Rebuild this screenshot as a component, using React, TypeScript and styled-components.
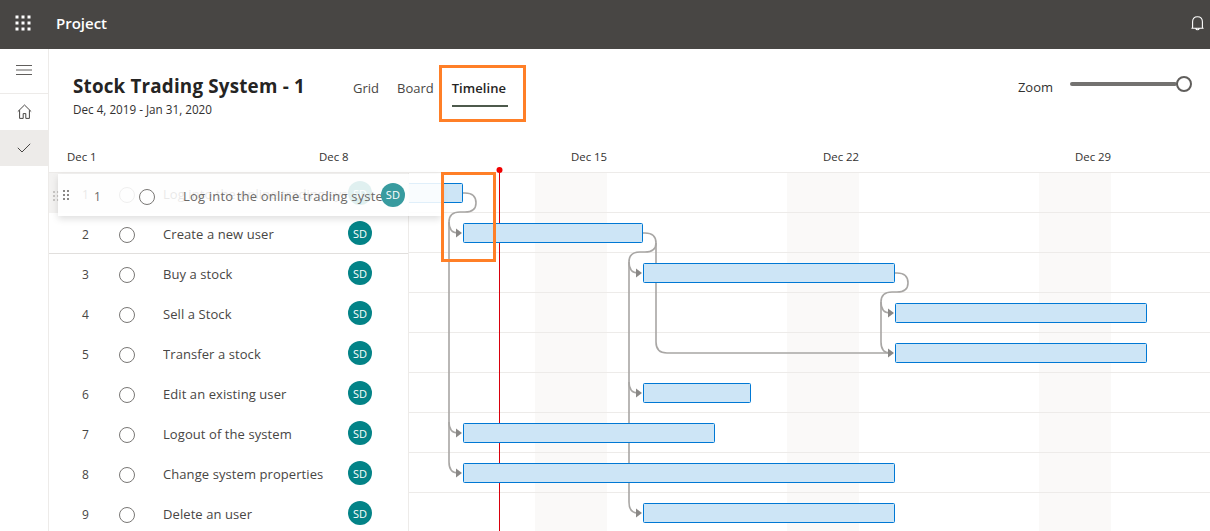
import React from "react";
import styled, { createGlobalStyle } from "styled-components";

const Global = createGlobalStyle`
  html, body { margin: 0; padding: 0; background: #fff; }
  body { font-family: "Open Sans", "Noto Sans", sans-serif; color: #323130; overflow: hidden; }
  #root { width: 1210px; height: 531px; overflow: hidden; }
`;

const Page = styled.div`
  position: relative;
  width: 1210px;
  height: 531px;
  display: flex;
  flex-direction: column;
  overflow: hidden;
`;
const TopBar = styled.header`
  height: 49px;
  flex: none;
  background: #484644;
  display: flex;
  align-items: center;
  color: #fff;
  padding-bottom: 2px;
  box-sizing: border-box;
`;
const Waffle = styled.svg`
  width: 16px;
  height: 16px;
  margin-left: 15px;
  margin-bottom: 2px;
`;
const Brand = styled.div`
  margin-left: 25px;
  margin-bottom: 1px;
  font-size: 15px;
  font-weight: 600;
  flex: 1;
`;
const Bell = styled.svg`
  width: 13px;
  height: 15px;
  margin-right: 6px;
`;
const Body = styled.div`
  flex: 1;
  display: flex;
  min-height: 0;
`;
const Rail = styled.nav`
  width: 48px;
  flex: none;
  border-right: 1px solid #edebe9;
  display: flex;
  flex-direction: column;
`;
const RailItem = styled.div<{ $h: number; $active?: boolean; $line?: boolean; $lift?: number }>`
  height: ${(p) => p.$h}px;
  display: flex;
  align-items: center;
  justify-content: center;
  box-sizing: border-box;
  padding-bottom: ${(p) => p.$lift ?? 0}px;
  background: ${(p) => (p.$active ? "#edebe9" : "transparent")};
  border-bottom: ${(p) => (p.$line ? "1px solid #edebe9" : "none")};
`;
const Main = styled.main`
  flex: 1;
  min-width: 0;
  display: flex;
  flex-direction: column;
`;
const Head = styled.div`
  height: 84px;
  flex: none;
  display: flex;
  align-items: flex-start;
  padding: 25px 18px 0 24px;
  box-sizing: border-box;
`;
const TitleBlock = styled.div`
  width: 280px;
`;
const Title = styled.h1`
  margin: 0;
  font-size: 18.8px;
  line-height: 24px;
  font-weight: 700;
  letter-spacing: 0.2px;
  white-space: nowrap;
  color: #252423;
`;
const Dates = styled.div`
  font-size: 11.7px;
  line-height: 16px;
  margin-top: 3px;
  color: #323130;
`;
const Tabs = styled.div`
  display: flex;
  gap: 18px;
  margin-top: 4px;
`;
const Tab = styled.div<{ $active?: boolean }>`
  font-size: 13px;
  line-height: 20px;
  height: 29px;
  box-sizing: border-box;
  padding-right: ${(p) => (p.$active ? 2 : 0)}px;
  letter-spacing: ${(p) => (p.$active ? 0.05 : 0)}px;
  color: ${(p) => (p.$active ? "#252423" : "#484644")};
  font-weight: ${(p) => (p.$active ? 600 : 400)};
  border-bottom: ${(p) => (p.$active ? "2px solid #4d5a4c" : "2px solid transparent")};
  white-space: nowrap;
`;
const ZoomBox = styled.div`
  margin-left: auto;
  display: flex;
  align-items: center;
  height: 20px;
`;
const ZoomLabel = styled.span`
  font-size: 13px;
  margin-right: 17px;
  position: relative;
  top: 3px;
`;
const Track = styled.div`
  width: 107px;
  height: 4px;
  border-radius: 2px;
  background: #737270;
`;
const Thumb = styled.div`
  width: 16px;
  height: 16px;
  box-sizing: border-box;
  border: 2px solid #605e5c;
  border-radius: 50%;
  background: #fff;
  margin-left: -1px;
`;
const Months = styled.div`
  height: 40px;
  flex: none;
  display: grid;
  grid-template-columns: repeat(5, 252px);
  padding-left: 18px;
  font-size: 11.4px;
  line-height: 16px;
  color: #323130;
  box-sizing: border-box;
  border-bottom: 1px solid #edebe9;
  padding-top: 16px;
`;
const Grid = styled.div`
  flex: 1;
  min-height: 0;
  display: flex;
`;
const List = styled.div`
  width: 360px;
  flex: none;
  border-right: 1px solid #edebe9;
  box-sizing: border-box;
`;
const Row = styled.div<{ $shade?: boolean; $drop?: boolean }>`
  height: 40px;
  box-sizing: border-box;
  display: flex;
  align-items: center;
  font-size: 13px;
  letter-spacing: 0.08px;
  color: #484644;
  background: ${(p) => (p.$shade ? "#f3f2f1" : "transparent")};
  box-shadow: ${(p) => (p.$drop ? "0 1px 0 #e1dfdd" : "none")};
`;
const Num = styled.span`
  width: 41px;
  flex: none;
  margin-top: 2px;
  text-align: right;
  padding-right: 1px;
  box-sizing: border-box;
  font-size: 12px;
`;
const Circle = styled.span`
  width: 16px;
  height: 16px;
  flex: none;
  box-sizing: border-box;
  border: 1px solid #797775;
  border-radius: 50%;
  margin-left: 29px;
  margin-top: 4px;
`;
const Name = styled.span`
  width: 185px;
  flex: none;
  margin-left: 28px;
  margin-top: 2px;
  white-space: nowrap;
  overflow: hidden;
`;
const Avatar = styled.span`
  width: 24px;
  height: 24px;
  flex: none;
  border-radius: 50%;
  background: #038387;
  color: #fff;
  font-size: 11px;
  font-weight: 500;
  display: flex;
  align-items: center;
  justify-content: center;
`;
const Chart = styled.svg`
  display: block;
  width: 801px;
  height: 358px;
  flex: none;
`;
const Ghost = styled.div`
  position: absolute;
  left: 58px;
  top: 174px;
  width: 383px;
  height: 42px;
  display: flex;
  align-items: center;
  background: rgba(255, 255, 255, 0.88);
  box-shadow: 0 3px 7px rgba(0, 0, 0, 0.13);
  font-size: 13px;
  letter-spacing: 0.18px;
  color: #6b6967;
`;
const GhostGrip = styled.svg`
  width: 8px;
  height: 12px;
  margin-left: 4px;
  flex: none;
`;
const GhostNum = styled.span`
  width: 14px;
  margin-left: 24px;
  margin-top: 2px;
  font-size: 12px;
  flex: none;
`;
const GhostCircle = styled(Circle)`
  margin-left: 31px;
`;
const GhostName = styled.span`
  width: 200px;
  flex: none;
  margin-left: 28px;
  margin-top: 2px;
  white-space: nowrap;
  overflow: hidden;
`;
const GhostAvatar = styled(Avatar)`
  background: #389b9f;
  margin-left: -2px;
  margin-bottom: 1px;
`;
const LeftGrip = styled.svg`
  position: absolute;
  left: 53px;
  top: 190px;
  width: 6px;
  height: 12px;
`;
const TodayPin = styled.svg`
  position: absolute;
  left: 494px;
  top: 165px;
  width: 10px;
  height: 10px;
`;
const Callout = styled.div<{ $x: number; $y: number; $w: number; $h: number }>`
  position: absolute;
  left: ${(p) => p.$x}px;
  top: ${(p) => p.$y}px;
  width: ${(p) => p.$w}px;
  height: ${(p) => p.$h}px;
  box-sizing: border-box;
  border: 3px solid #ff7f27;
  pointer-events: none;
`;

const tasks = [
  "Log into the online trading system",
  "Create a new user",
  "Buy a stock",
  "Sell a Stock",
  "Transfer a stock",
  "Edit an existing user",
  "Logout of the system",
  "Change system properties",
  "Delete an user",
];
const ox = 409;
const oy = 173;
const bars: [number, number, number][] = [
  [463, 400, 183],
  [643, 463, 223],
  [895, 643, 263],
  [1147, 895, 303],
  [1147, 895, 343],
  [751, 643, 383],
  [715, 463, 423],
  [895, 463, 463],
  [895, 643, 503],
];
const X = (v: number) => v - ox;
const Y = (v: number) => v - oy;

const links = [
  "M463 193 H465 Q476 193 476 203 Q476 212 465 212 H460 Q449 212 449 222 Q449 233 458 233",
  "M449 222 V462 Q449 473 458 473",
  "M449 422 Q449 433 458 433",
  "M643 233 H645 Q656 233 656 243 Q656 252 645 252 H640 Q629 252 629 262 Q629 273 638 273",
  "M629 262 V502 Q629 513 638 513",
  "M629 382 Q629 393 638 393",
  "M656 243 V342 Q656 353 667 353 H890",
  "M895 273 H897 Q908 273 908 283 Q908 292 897 292 H892 Q881 292 881 302 Q881 313 890 313",
  "M881 302 V342 Q881 353 890 353",
];
const arrows: [number, number][] = [
  [463, 233], [463, 433], [463, 473], [643, 273], [643, 393], [643, 513], [895, 313], [895, 353],
];

export default function App() {
  return (
    <Page>
      <Global />
      <TopBar>
        <Waffle viewBox="0 0 16 16" fill="#fff">
          {[0, 6, 12].flatMap((x) =>
            [0, 6, 12].map((y) => <rect key={`${x}-${y}`} x={x + 0.5} y={y + 0.5} width="3" height="3" />)
          )}
        </Waffle>
        <Brand>Project</Brand>
        <Bell viewBox="0 0 13 15" fill="none" stroke="#fff" strokeWidth="1.1">
          <path d="M1.6 12.3V5.8C1.6 2.8 3.6.7 6.5.7s4.9 2.1 4.9 5.1v6.5ZM.4 12.3h12.2M4.9 12.7c.2 1.4 3 1.4 3.2 0" />
        </Bell>
      </TopBar>
      <Body>
        <Rail>
          <RailItem $h={45} $line $lift={2}>
            <svg width="16" height="10" viewBox="0 0 16 10" stroke="#605e5c" strokeWidth="1">
              <path d="M0 .5h16M0 5h16M0 9.5h16" />
            </svg>
          </RailItem>
          <RailItem $h={36} $lift={2}>
            <svg width="15" height="15" viewBox="0 0 15 15" fill="none" stroke="#484644" strokeWidth="1">
              <path d="M.8 7.6 7.5 1l6.7 6.6M2.6 6.2v8.2h3.6V9.6h2.6v4.8h3.6V6.2" />
            </svg>
          </RailItem>
          <RailItem $h={36} $active>
            <svg width="14" height="10" viewBox="0 0 14 10" fill="none" stroke="#484644" strokeWidth="1">
              <path d="M.8 4.8 5 9 13.2.8" />
            </svg>
          </RailItem>
        </Rail>
        <Main>
          <Head>
            <TitleBlock>
              <Title>Stock Trading System - 1</Title>
              <Dates>Dec 4, 2019 - Jan 31, 2020</Dates>
            </TitleBlock>
            <Tabs>
              <Tab>Grid</Tab>
              <Tab>Board</Tab>
              <Tab $active>Timeline</Tab>
            </Tabs>
            <ZoomBox>
              <ZoomLabel>Zoom</ZoomLabel>
              <Track />
              <Thumb />
            </ZoomBox>
          </Head>
          <Months>
            <span>Dec 1</span>
            <span>Dec 8</span>
            <span>Dec 15</span>
            <span>Dec 22</span>
            <span>Dec 29</span>
          </Months>
          <Grid>
            <List>
              {tasks.map((t, i) => (
                <Row key={t} $shade={i === 0} $drop={i === 1}>
                  <Num>{i + 1}</Num>
                  <Circle />
                  <Name>{t}</Name>
                  <Avatar>SD</Avatar>
                </Row>
              ))}
            </List>
            <Chart viewBox="0 0 801 358">
              {[535, 787, 1039].map((x) => (
                <rect key={x} x={X(x)} y="0" width="72" height="358" fill="#faf9f8" />
              ))}
              {[212, 252, 292, 332, 372, 412, 452, 492].map((y) => (
                <rect key={y} x="0" y={Y(y)} width="801" height="1" fill="#edebe9" />
              ))}
              <rect x={X(499)} y="0" width="1" height="358" fill="#d8000c" />
              <g transform={`translate(${-ox} ${-oy})`} fill="none" stroke="#a8a6a4" strokeWidth="1.6">
                {links.map((d) => (
                  <path key={d} d={d} />
                ))}
              </g>
              {arrows.map(([x, y]) => (
                <path
                  key={`${x}-${y}`}
                  d={`M${X(x) - 7} ${Y(y) - 4.5}L${X(x) - 1} ${Y(y)}L${X(x) - 7} ${Y(y) + 4.5}Z`}
                  fill="#8a8886"
                />
              ))}
              {bars.map(([end, start, y]) => (
                <rect
                  key={y}
                  x={X(start) + 0.5}
                  y={Y(y) + 0.5}
                  width={end - start - 1}
                  height="19"
                  rx="1"
                  fill="#cde5f6"
                  stroke="#0078d4"
                />
              ))}
            </Chart>
          </Grid>
        </Main>
      </Body>
      <LeftGrip viewBox="0 0 6 12" fill="#c8c6c4">
        {[1, 5, 9].flatMap((y) => [0, 4].map((x) => <rect key={`${x}-${y}`} x={x} y={y} width="2" height="2" />))}
      </LeftGrip>
      <Ghost>
        <GhostGrip viewBox="0 0 8 12" fill="#8a8886">
          {[1, 5, 9].flatMap((y) => [1, 5].map((x) => <rect key={`${x}-${y}`} x={x} y={y} width="2" height="2" />))}
        </GhostGrip>
        <GhostNum>1</GhostNum>
        <GhostCircle />
        <GhostName>Log into the online trading system</GhostName>
        <GhostAvatar>SD</GhostAvatar>
      </Ghost>
      <TodayPin viewBox="0 0 10 10">
        <rect x="5" y="5" width="1" height="5" fill="#d8000c" />
        <circle cx="5.5" cy="5" r="3" fill="#f00000" />
      </TodayPin>
      <Callout $x={439} $y={65} $w={87} $h={57} />
      <Callout $x={441} $y={172} $w={55} $h={90} />
    </Page>
  );
}
